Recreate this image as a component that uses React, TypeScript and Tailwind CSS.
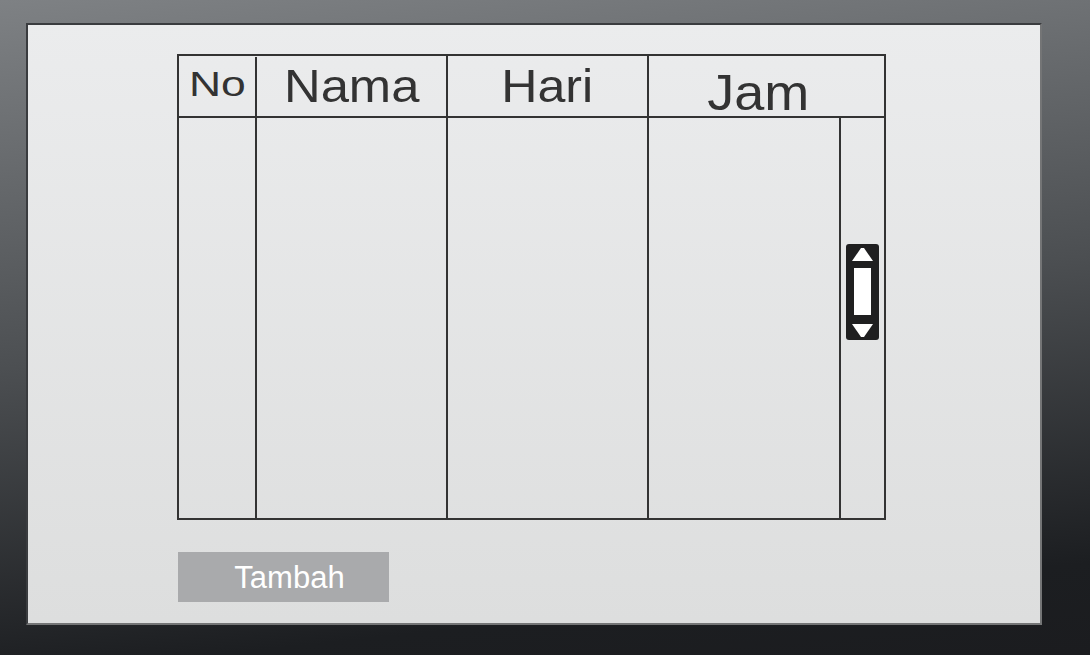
import React from 'react';

const font = { fontFamily: '"Liberation Sans", Arial, sans-serif' };

const ScrollThumb: React.FC = () => (
  <svg width="33" height="96" viewBox="0 0 33 96">
    <rect x="0" y="0" width="33" height="96" rx="3" fill="#1f1f20" />
    <polygon points="6,17 27,17 18,4 15,4" fill="#ffffff" />
    <rect x="8" y="24" width="17" height="47" fill="#ffffff" />
    <polygon points="6,80 27,80 18,93 15,93" fill="#ffffff" />
  </svg>
);

const HeaderCell: React.FC<{
  label: string;
  className: string;
  textClass: string;
}> = ({ label, className, textClass }) => (
  <div className={`h-full text-center ${className}`}>
    <span className={`inline-block leading-none text-[#333333] ${textClass}`}>
      {label}
    </span>
  </div>
);

export default function App() {
  return (
    <div
      className="w-[1090px] h-[655px] overflow-hidden pl-[26px] pt-[23px] bg-[linear-gradient(174deg,#7e8184_0%,#4c4f52_48%,#1c1e21_88%,#1b1c1f_100%)]"
      style={font}
    >
      <div className="w-[1016px] h-[602px] border-2 border-t-[#3a3c3f] border-l-[#3a3c3f] border-r-[#747576] border-b-[#747576] bg-linear-to-b from-[#ebeced] to-[#dddede] pl-[149px] pt-[29px]">
        {/* table */}
        <div className="w-[709px] h-[466px] border-2 border-[#333333] flex flex-col">
          <div className="h-[62px] border-b-2 border-[#333333] flex">
            <HeaderCell
              label="No"
              className="w-[76px] pt-[10px]"
              textClass="text-[35px] scale-x-[1.27]"
            />
            <div className="w-[191px] h-full pt-[1px]">
              <HeaderCell
                label="Nama"
                className="border-l-2 border-[#333333] pt-[5px]"
                textClass="text-[47px] scale-x-[1.08]"
              />
            </div>
            <HeaderCell
              label="Hari"
              className="w-[201px] border-l-2 border-[#333333] pt-[7px]"
              textClass="text-[46px] scale-x-[1.09]"
            />
            <HeaderCell
              label="Jam"
              className="flex-1 border-l-2 border-[#333333] pt-[12px] pr-[17px]"
              textClass="text-[50px] scale-x-[1.08]"
            />
          </div>
          <div className="flex-1 flex">
            <div className="w-[76px]" />
            <div className="w-[191px] border-l-2 border-[#333333]" />
            <div className="w-[201px] border-l-2 border-[#333333]" />
            <div className="w-[192px] border-l-2 border-[#333333]" />
            <div className="flex-1 border-l-2 border-[#333333] flex justify-center pt-[126px]">
              <ScrollThumb />
            </div>
          </div>
        </div>

        {/* button */}
        <button className="mt-[32px] ml-px w-[211px] h-[50px] bg-[#a9aaac] text-white text-[31px] leading-none flex items-center justify-center pl-[12px]">
          Tambah
        </button>
      </div>
    </div>
  );
}
